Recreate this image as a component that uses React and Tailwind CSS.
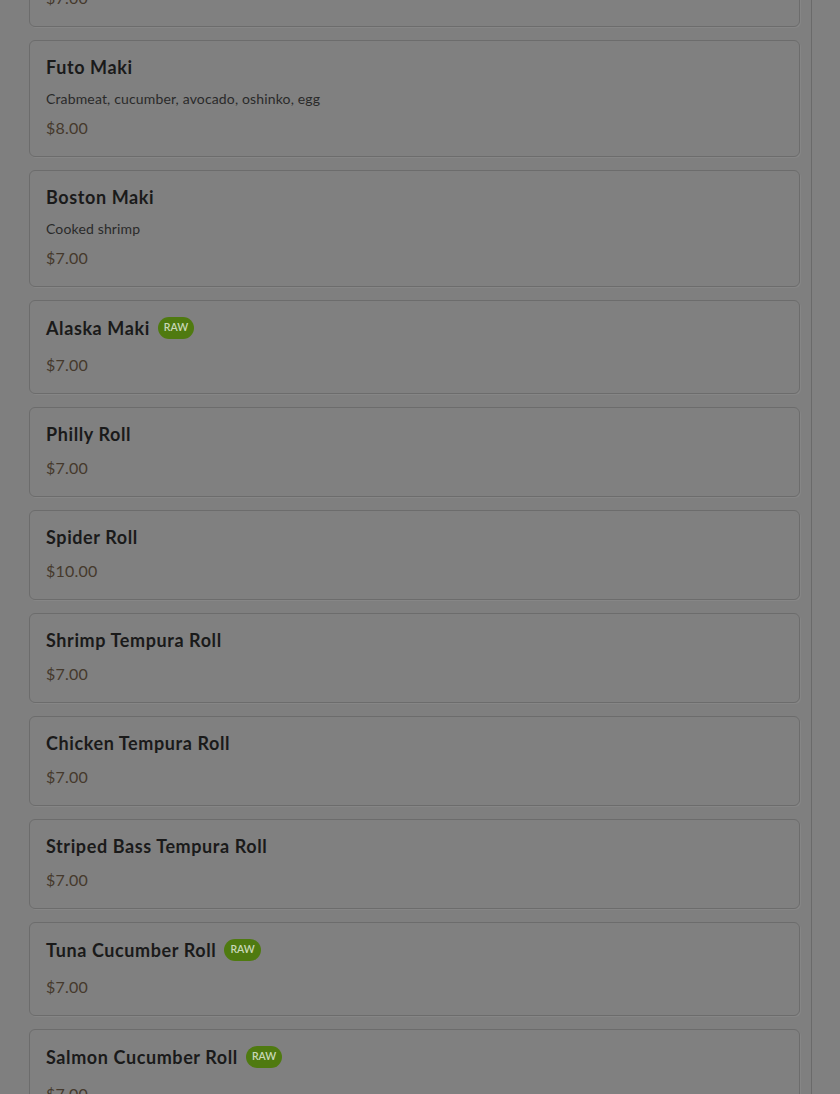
const items = [
  { name: "", price: "$7.00" },
  { name: "Futo Maki", desc: "Crabmeat, cucumber, avocado, oshinko, egg", price: "$8.00" },
  { name: "Boston Maki", desc: "Cooked shrimp", price: "$7.00" },
  { name: "Alaska Maki", raw: true, price: "$7.00" },
  { name: "Philly Roll", price: "$7.00" },
  { name: "Spider Roll", price: "$10.00" },
  { name: "Shrimp Tempura Roll", price: "$7.00" },
  { name: "Chicken Tempura Roll", price: "$7.00" },
  { name: "Striped Bass Tempura Roll", price: "$7.00" },
  { name: "Tuna Cucumber Roll", raw: true, price: "$7.00" },
  { name: "Salmon Cucumber Roll", raw: true, price: "$7.00" },
];

function MenuCard({ item }) {
  return (
    <div className="rounded-md border border-[#6c6c6c] bg-[#808080] px-4 pt-4 pb-4 shadow-[1px_1px_0_rgba(255,255,255,0.06)]">
      <div className={item.raw ? "flex h-[22px] items-center" : "flex h-5 items-center"}>
        <h3 className="text-[18px] leading-5 font-bold tracking-[0.6px] text-[#1a1a1a]">{item.name}</h3>
        {item.raw && (
          <span className="ml-[8px] flex h-[22px] items-center rounded-full bg-[#4f7a10] px-[6px] text-[10.5px] font-semibold text-[#c9d8b8]">
            RAW
          </span>
        )}
      </div>
      {item.desc && (
        <p className="mt-3 text-[14px] leading-5 tracking-[0.15px] text-[#2a2a2a]">{item.desc}</p>
      )}
      <p
        className={
          item.desc
            ? "mt-[7px] text-[16px] leading-6 tracking-[0.2px] text-[#45392c]"
            : item.raw
            ? "mt-[14px] text-[16px] leading-6 tracking-[0.2px] text-[#45392c]"
            : "mt-3 text-[16px] leading-6 tracking-[0.2px] text-[#45392c]"
        }
      >
        {item.price}
      </p>
    </div>
  );
}

export default function App() {
  return (
    <div
      className="flex h-[1094px] overflow-hidden bg-[#7f7f7f]"
      style={{ fontFamily: "Lato, 'Noto Sans', sans-serif" }}
    >
      <div className="flex-1 pl-[29px] pr-[11px]">
        <div className="-mt-[63px] flex flex-col gap-[13px]">
          {items.map((item, i) => (
            <MenuCard key={i} item={item} />
          ))}
        </div>
      </div>
      <div className="w-[29px] shrink-0 border-l border-[#6a6a6a] bg-[#808080]" />
    </div>
  );
}
